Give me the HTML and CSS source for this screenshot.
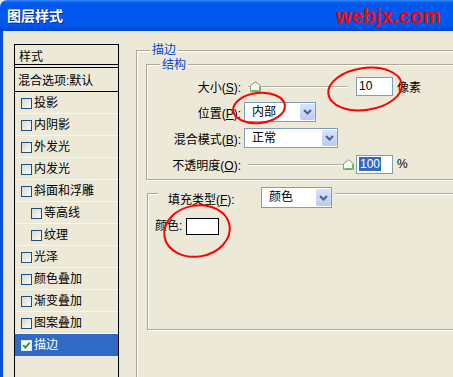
FILE: index.html
```html
<!DOCTYPE html>
<html lang="zh-CN">
<head>
  <meta charset="UTF-8">
  <title>图层样式</title>
  <link rel="stylesheet" href="styles.css">
</head>
<body>
  <div class="window">
    <div class="titlebar">
      <span class="title">图层样式</span>
      <span class="watermark">webjx.com</span>
    </div>

    <div class="main">
      <div class="styles-list">
        <div class="list-head">样式</div>
        <div class="list-blend">混合选项:默认</div>
        <ul class="list-items">
          <li><span class="check"></span>投影</li>
          <li><span class="check"></span>内阴影</li>
          <li><span class="check"></span>外发光</li>
          <li><span class="check"></span>内发光</li>
          <li><span class="check"></span>斜面和浮雕</li>
          <li class="sub"><span class="check"></span>等高线</li>
          <li class="sub"><span class="check"></span>纹理</li>
          <li><span class="check"></span>光泽</li>
          <li><span class="check"></span>颜色叠加</li>
          <li><span class="check"></span>渐变叠加</li>
          <li><span class="check"></span>图案叠加</li>
          <li class="selected">
            <span class="check checked">
              <svg width="9" height="9" viewBox="0 0 9 9"><path d="M1.2 4.2l2.2 2.4L7.8 1.6" fill="none" stroke="#21a121" stroke-width="2"/></svg>
            </span>描边
          </li>
        </ul>
      </div>

      <div class="settings">
        <div class="group outer">
          <div class="group-title">描边</div>

          <div class="group inner">
            <div class="group-title inner-title">结构</div>
            <div class="rows">
              <div class="row">
                <span class="label">大小(<u>S</u>):</span>
                <div class="slider">
                  <span class="thumb thumb-min">
                    <svg width="11" height="11" viewBox="0 0 11 11"><path d="M0.5 10.5V4.8L5.5 0.7L10.5 4.8V10.5Z" fill="#f6f8f2" stroke="#8c9a8c"/><path d="M1.5 9.5H9.5V5.2" fill="none" stroke="#5fbf62"/></svg>
                  </span>
                </div>
                <div class="field">10</div>
                <span class="unit">像素</span>
              </div>
              <div class="row">
                <span class="label">位置(<u>P</u>):</span>
                <div class="combo combo-short">
                  <span class="combo-text">内部</span>
                  <span class="combo-btn"><svg width="9" height="6" viewBox="0 0 9 6"><path d="M1 1l3.5 3.5L8 1" fill="none" stroke="#4d6185" stroke-width="2"/></svg></span>
                </div>
              </div>
              <div class="row">
                <span class="label">混合模式(<u>B</u>):</span>
                <div class="combo combo-long">
                  <span class="combo-text">正常</span>
                  <span class="combo-btn"><svg width="9" height="6" viewBox="0 0 9 6"><path d="M1 1l3.5 3.5L8 1" fill="none" stroke="#4d6185" stroke-width="2"/></svg></span>
                </div>
              </div>
              <div class="row">
                <span class="label">不透明度(<u>O</u>):</span>
                <div class="slider">
                  <span class="thumb thumb-max">
                    <svg width="11" height="11" viewBox="0 0 11 11"><path d="M0.5 10.5V4.8L5.5 0.7L10.5 4.8V10.5Z" fill="#f6f8f2" stroke="#8c9a8c"/><path d="M1.5 9.5H9.5V5.2" fill="none" stroke="#5fbf62"/></svg>
                  </span>
                </div>
                <div class="field"><span class="selected-text">100</span></div>
                <span class="unit">%</span>
              </div>
            </div>
          </div>

          <div class="group fill">
            <div class="fill-head">
              <span class="fill-label">填充类型(<u>F</u>):</span>
              <div class="combo combo-short">
                <span class="combo-text">颜色</span>
                <span class="combo-btn"><svg width="9" height="6" viewBox="0 0 9 6"><path d="M1 1l3.5 3.5L8 1" fill="none" stroke="#4d6185" stroke-width="2"/></svg></span>
              </div>
            </div>
            <div class="color-row">
              <span>颜色:</span>
              <span class="swatch"></span>
            </div>
          </div>
        </div>
      </div>
    </div>

    <!-- red hand-drawn marks over the dialog -->
    <svg class="marks" width="453" height="377" viewBox="0 0 453 377">
      <ellipse cx="365" cy="89" rx="37" ry="21" transform="rotate(-8 365 89)"/>
      <ellipse cx="259" cy="108" rx="26" ry="15" transform="rotate(-6 259 108)"/>
      <ellipse cx="197" cy="231" rx="33" ry="25.5" transform="rotate(-10 197 231)"/>
    </svg>
  </div>
</body>
</html>
```

FILE: styles.css
```css
body {
  margin: 0;
  font-family: "Liberation Sans", "Noto Sans CJK SC", sans-serif;
  font-size: 12px;
  color: #000;
  background: #ece9d8;
}

.window {
  position: relative;
  width: 453px;
  height: 377px;
  overflow: hidden;
  display: flex;
  flex-direction: column;
}

/* title bar */
.titlebar {
  flex: none;
  height: 31px;
  display: flex;
  align-items: center;
  padding: 0 12px 0 7px;
  border-top-left-radius: 7px;
  background: linear-gradient(to bottom, #3d8ff9 0, #0b5ff0 2px, #0057ec 5px, #005bf0 50%, #0056ea 85%, #0042cf 100%);
}

.title {
  color: #fff;
  font-weight: bold;
  font-size: 14px;
  line-height: 16px;
  text-shadow: 1px 1px 0 #0c2a8c;
}

.watermark {
  margin-left: auto;
  margin-top: 1px;
  color: #f00;
  font-family: "Liberation Sans", sans-serif;
  font-weight: bold;
  font-size: 20px;
  letter-spacing: 0.3px;
}

.main {
  flex: 1;
  display: flex;
  border-left: 3px solid #0a4fe2;
}

/* left style list */
.styles-list {
  flex: none;
  width: 105px;
  height: 400px;
  box-sizing: border-box;
  margin: 13px 0 0 11px;
  border: 1px solid #000;
}

.list-head {
  height: 20px;
  line-height: 20px;
  padding: 2px 0 0 4px;
  box-sizing: border-box;
  border-bottom: 1px solid #000;
}

.list-blend {
  height: 25px;
  box-sizing: border-box;
  margin-top: 2px;
  padding: 4px 0 0 3px;
  line-height: 18px;
  border-top: 1px solid #000;
  border-bottom: 1px solid #000;
}

.list-items {
  list-style: none;
  margin: 0;
  padding: 0;
}

.list-items li {
  height: 22px;
  box-sizing: border-box;
  display: flex;
  align-items: center;
  padding: 1px 0 0 6px;
  line-height: 16px;
  border-bottom: 1px solid #f7f6f0;
}

.list-items li.sub {
  padding-left: 16px;
}

.list-items li.selected {
  background: #316ac5;
  color: #fff;
  border-bottom-color: #316ac5;
}

.check {
  width: 11px;
  height: 11px;
  box-sizing: border-box;
  margin-right: 2px;
  border: 1px solid #1c5180;
  background: linear-gradient(135deg, #d8d8d2, #fbfbf8);
  display: flex;
  align-items: center;
  justify-content: center;
}

.check.checked {
  background: #fff;
  border-color: #dfe6f3;
}

/* right settings */
.settings {
  flex: none;
  width: 340px;
  margin: 19px 0 0 17px;
}

.group {
  border: 1px solid #aca899;
  box-shadow: inset 1px 1px 0 #fff, 1px 1px 0 #fff;
}

.group-title {
  width: fit-content;
  margin: -8px 0 0 4px;
  padding: 0 2px;
  line-height: 14px;
  color: #0046d5;
  background: #ece9d8;
}

.outer {
  height: 400px;
  padding-left: 9px;
}

.inner {
  margin-top: 7px;
  padding-bottom: 5px;
}

.inner-title {
  margin: -7px 0 0 13px;
}

.rows {
  margin-top: 4px;
  display: flex;
  flex-direction: column;
  gap: 6px;
}

.row {
  height: 20px;
  display: flex;
  align-items: center;
}

.label {
  width: 94px;
  text-align: right;
}

u {
  text-decoration-thickness: 1px;
  text-underline-offset: 1px;
}

.slider {
  position: relative;
  width: 100px;
  height: 20px;
  margin-left: 7px;
}

.slider::before {
  content: "";
  position: absolute;
  left: 0;
  right: 0;
  top: 10px;
  border-top: 1px solid #b3b1a6;
  border-bottom: 1px solid #fff;
}

.thumb {
  position: absolute;
  top: 5px;
  width: 11px;
  height: 11px;
  display: flex;
}

.thumb-min {
  left: 2px;
}

.thumb-max {
  left: 95px;
}

.field {
  width: 37px;
  height: 19px;
  box-sizing: border-box;
  margin-left: 8px;
  padding: 1px 0 0 2px;
  line-height: 15px;
  border: 1px solid #7f9db9;
  background: #fff;
}

.selected-text {
  background: #316ac5;
  color: #fff;
  padding: 0 1px;
}

.unit {
  margin-left: 4px;
}

.combo {
  height: 20px;
  box-sizing: border-box;
  margin-left: 3px;
  display: flex;
  border: 1px solid #7f9db9;
  background: #fff;
}

.combo-short {
  width: 72px;
}

.combo-long {
  width: 94px;
}

.combo-text {
  padding-left: 7px;
  line-height: 18px;
}

.combo-btn {
  margin: 1px 0 1px auto;
  width: 15px;
  display: flex;
  align-items: center;
  justify-content: center;
  border-radius: 2px;
  background: linear-gradient(to bottom, #d9e3fb, #b8cbf6);
}

/* fill type group */
.fill {
  margin: 13px 0 0 1px;
  padding: 0 0 94px 7px;
}

.fill-head {
  width: fit-content;
  height: 21px;
  margin: -7px 0 0 3px;
  padding: 0 3px 0 10px;
  display: flex;
  align-items: center;
  background: #ece9d8;
}

.fill-label {
  width: 90px;
  padding-top: 1px;
}

.fill-head .combo {
  width: 71px;
  height: 21px;
}

.color-row {
  margin-top: 10px;
  height: 17px;
  display: flex;
  align-items: center;
  line-height: 17px;
}

.swatch {
  width: 33px;
  height: 17px;
  box-sizing: border-box;
  margin-left: 4px;
  border: 1px solid #000;
  background: #fff;
}

/* red annotation marks */
.marks {
  position: absolute;
  left: 0;
  top: 0;
  pointer-events: none;
}

.marks ellipse {
  fill: none;
  stroke: #f00;
  stroke-width: 2;
}
```
